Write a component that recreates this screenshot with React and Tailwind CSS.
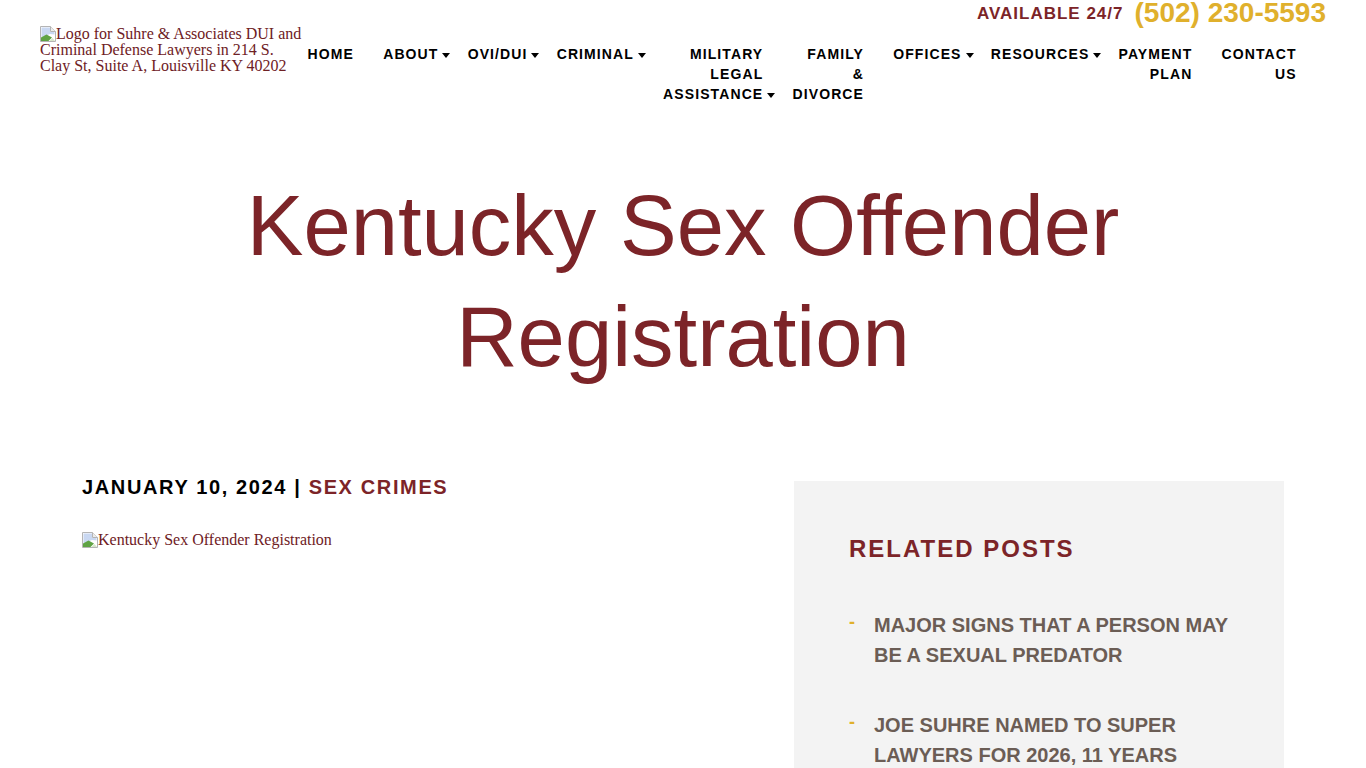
const sans = "font-['Liberation_Sans',Arial,sans-serif]";

function BrokenImage() {
  return (
    <svg width="16" height="16" viewBox="0 0 16 16" className="inline-block align-top shrink-0">
      <path d="M0.5 0.5H10.5L15.5 5.5V15.5H0.5Z" fill="#fff" stroke="#b4b4b4" />
      <path d="M10.5 0.5V5.5H15.5" fill="#ececec" stroke="#b4b4b4" />
      <path d="M1.5 1.5H10V6H14.5V8.5L10 8L1.5 11.5Z" fill="#c9d8f2" />
      <path d="M1 15V11.5L6.5 8.5L12 11.5L8.5 15Z" fill="#5fa344" />
      <path d="M9.5 15L12.5 12L15 15Z" fill="#d5e6c8" />
    </svg>
  );
}

const items = [
  { lines: ["HOME"] },
  { lines: ["ABOUT"], caret: true },
  { lines: ["OVI/DUI"], caret: true },
  { lines: ["CRIMINAL"], caret: true },
  { lines: ["MILITARY", "LEGAL", "ASSISTANCE"], caret: true },
  { lines: ["FAMILY", "&", "DIVORCE"] },
  { lines: ["OFFICES"], caret: true },
  { lines: ["RESOURCES"], caret: true },
  { lines: ["PAYMENT", "PLAN"] },
  { lines: ["CONTACT", "US"] },
];

function NavItem({ item }) {
  return (
    <div className="shrink-0 px-[14.6px] text-right text-[14px] leading-[20px] font-bold tracking-[1.1px] text-black whitespace-nowrap">
      {item.lines.map((l, i) => (
        <div key={l}>
          <span className="relative inline-block">
            {l}
            {item.caret && i === item.lines.length - 1 && (
              <span className="absolute left-full top-[9px] ml-[4px] w-0 h-0 border-x-[4.5px] border-x-transparent border-t-[5px] border-t-black" />
            )}
          </span>
        </div>
      ))}
    </div>
  );
}

function Related({ lines, className = "" }) {
  return (
    <div className={`flex ${className}`}>
      <span className="w-[25px] shrink-0 text-[#e0b02c] text-[18px] font-bold leading-[24px]">-</span>
      <div className="text-[20px] leading-[30px] font-bold text-[#6b5d55] whitespace-nowrap">
        {lines.map((l) => <div key={l}>{l}</div>)}
      </div>
    </div>
  );
}

export default function App() {
  return (
    <div className={`h-screen overflow-hidden bg-white ${sans}`}>
      <div className="flex justify-end items-center h-[26px] pr-[40px] gap-[11px]">
        <span className="text-[17px] leading-[26px] pt-[1px] font-bold tracking-[1px] text-[#7c2428]">AVAILABLE 24/7</span>
        <span className="text-[28px] leading-[26px] font-bold text-[#e0b02c]">(502) 230-5593</span>
      </div>
      <header className="flex items-start pl-[40px]">
        <div className="w-[267px] shrink-0 font-['Liberation_Serif',serif] text-[16px] leading-[16px] text-[#6e2024]">
          <BrokenImage />
          Logo for Suhre &amp; Associates DUI and Criminal Defense Lawyers in 214 S. Clay St, Suite A, Louisville KY 40202
        </div>
        <nav className="flex mt-[18px] -ml-[14px]">
          {items.map((it) => <NavItem key={it.lines[0]} item={it} />)}
        </nav>
      </header>
      <h1 className="mt-[66px] w-[1000px] mx-auto text-center text-[85px] leading-[111px] font-normal text-[#7c2428]">
        Kentucky Sex Offender Registration
      </h1>
      <main className="flex justify-between items-start mt-[89px] px-[82px]">
        <div>
          <div className="text-[20px] leading-[30px] font-bold tracking-[1.63px] text-black -mt-[9px]">
            JANUARY 10, 2024 | <span className="text-[#7c2428]">SEX CRIMES</span>
          </div>
          <div className="mt-[30px] font-['Liberation_Serif',serif] text-[16px] leading-[16px] text-[#6e2024]">
            <BrokenImage />
            Kentucky Sex Offender Registration
          </div>
        </div>
        <aside className="w-[490px] h-[400px] bg-[#f3f3f3] pt-[52px] pl-[55px]">
          <h2 className="text-[24px] leading-[32px] font-bold tracking-[2px] text-[#7c2428]">RELATED POSTS</h2>
          <Related className="mt-[45px]" lines={["MAJOR SIGNS THAT A PERSON MAY", "BE A SEXUAL PREDATOR"]} />
          <Related className="mt-[40px]" lines={["JOE SUHRE NAMED TO SUPER", "LAWYERS FOR 2026, 11 YEARS"]} />
        </aside>
      </main>
    </div>
  );
}
